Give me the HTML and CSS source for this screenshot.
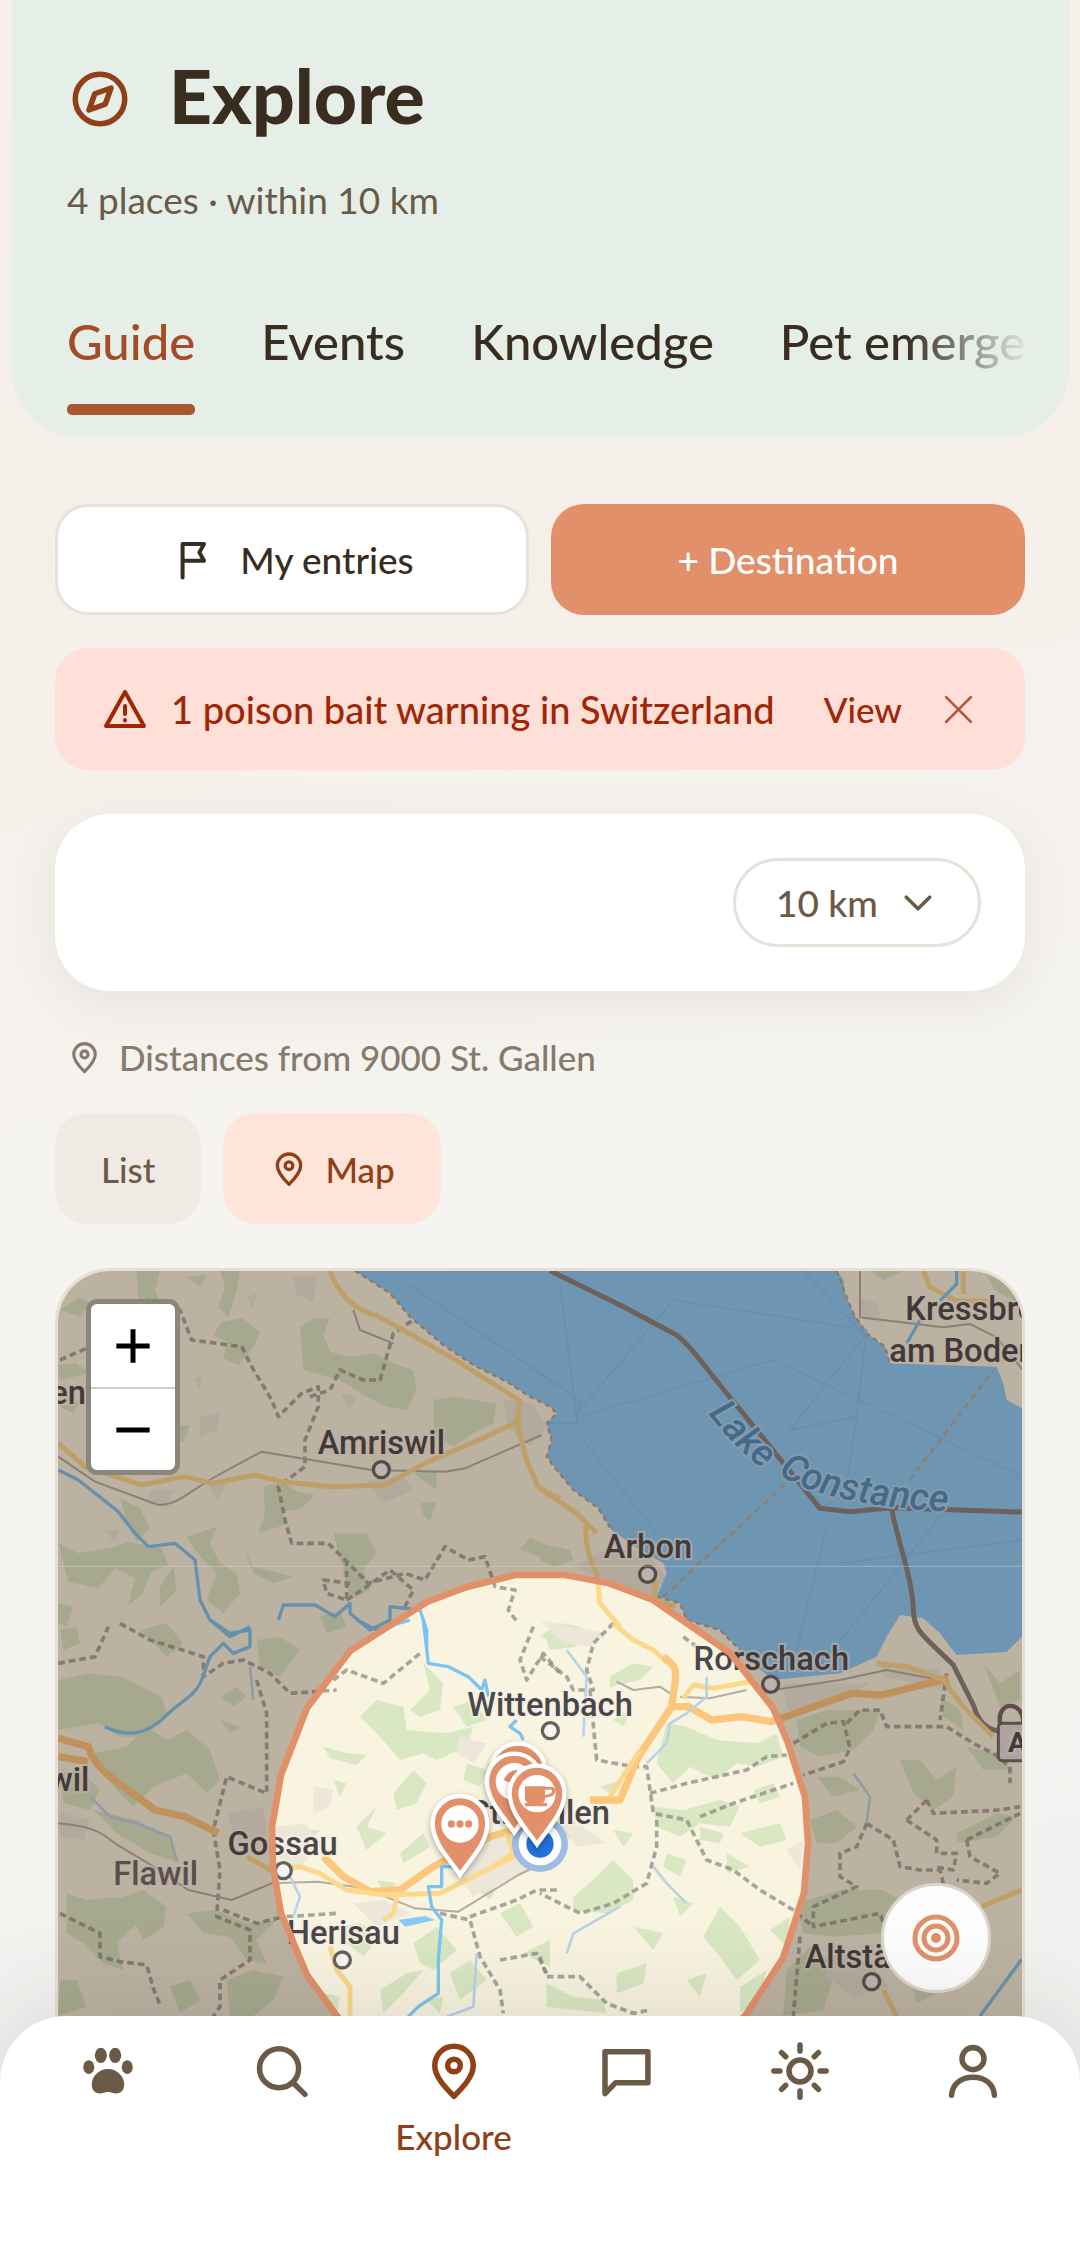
FILE: index.html
```html
<!DOCTYPE html>
<html lang="en">
<head>
  <meta charset="UTF-8">
  <meta name="viewport" content="width=device-width, initial-scale=1">
  <title>Explore</title>
  <link rel="stylesheet" href="styles.css">
</head>
<body>

  <!-- shared icons -->
  <svg class="defs" aria-hidden="true">
    <symbol id="icon-pin" viewBox="0 0 24 24">
      <path d="M12 21.2C8.6 17.8 5 14 5 10a7 7 0 0 1 14 0c0 4-3.6 7.800-7 11.200z"/>
      <circle cx="12" cy="10" r="2.300"/>
    </symbol>
    <symbol id="marker" viewBox="-100 -270 200 280" overflow="visible">
      <path class="marker-body" d="M0-14C-35-65-82-110-82-168A82 82 0 1 1 82-168C82-110 35-65 0-14z"/>
      <circle class="marker-hole" cx="0" cy="-166" r="56"/>
    </symbol>
  </svg>

  <header class="header">
    <div class="title-row">
      <svg class="icon title-icon" viewBox="0 0 24 24">
        <circle cx="12" cy="12" r="9"/>
        <path d="M16 8l-2.100 5.900L8 16l2.100-5.900z"/>
      </svg>
      <h1>Explore</h1>
    </div>
    <p class="subtitle">4 places · within 10 km</p>
    <nav class="tabs" aria-label="Sections">
      <a class="tab active" href="#guide">Guide</a>
      <a class="tab" href="#events">Events</a>
      <a class="tab" href="#knowledge">Knowledge</a>
      <a class="tab" href="#emergency">Pet emergency</a>
    </nav>
  </header>

  <main class="content">
    <div class="actions">
      <button type="button" class="btn btn-outline">
        <svg class="icon flag-icon" viewBox="0 0 24 24">
          <path d="M6.300 20.800V4H17l-2.300 4.200 2.300 4.200H6.300"/>
        </svg>
        My entries
      </button>
      <button type="button" class="btn btn-primary">+ Destination</button>
    </div>

    <div class="alert" role="alert">
      <svg class="icon alert-icon" viewBox="0 0 24 24">
        <path d="M12 3.500L21.500 20.500h-19zM12 10.500v4M12 17.500v.3"/>
      </svg>
      <span class="alert-text">1 poison bait warning in Switzerland</span>
      <a class="alert-link" href="#warnings">View</a>
      <button type="button" class="alert-close" aria-label="Close">
        <svg class="icon" viewBox="0 0 24 24"><path d="M3 3l18 18M21 3L3 21"/></svg>
      </button>
    </div>

    <div class="filter-card">
      <div class="radius">
        <select id="radius" name="radius" aria-label="Radius">
          <option>10 km</option>
          <option>25 km</option>
          <option>50 km</option>
        </select>
        <svg class="icon" viewBox="0 0 24 24"><path d="M2 7l10 10L22 7"/></svg>
      </div>
    </div>

    <p class="origin">
      <svg class="icon"><use href="#icon-pin"/></svg>
      Distances from 9000 St. Gallen
    </p>

    <div class="view-switch">
      <button type="button" class="view">List</button>
      <button type="button" class="view active">
        <svg class="icon"><use href="#icon-pin"/></svg>
        Map
      </button>
    </div>

    <section class="map" aria-label="Map">
      <svg class="map-canvas" viewBox="0 0 2892 2433" preserveAspectRatio="xMidYMin slice">
        <defs>
          <path id="lake-a" d="M1950 428Q2040 545 2150 620"/>
          <path id="lake-b" d="M2160 606Q2290 712 2800 728"/>
        </defs>
        <rect class="land" width="2892" height="2433"/>

        <!-- north west -->
        <g transform="translate(-54 -63)">
          <path class="forest" d="M290 62l70 0-15 60 30 60-10 70-30-80-40-20zM440 80l60-5-20 35zM540 62h60l-10 60-25 80-30-30 20-60zM545 215l60-10 55 40-15 40-50 60-45-20 10-50-40-20zM780 230l40-25h50l-20 50 20 50 60 15 70-10 60 30 60 20 10 60-30 60-60-10-60-30-80-50-110-30zM1180 450l60-10 130 20-10 60-60 30-60 40-60-40zM50 345l60-5 40 30-90 20zM60 470l60-20-20 40zM240 745l60 30 30 60-40 40-30-60zM670 710l60-15 40 30 55 10-40 40-60 10 10 40-80 25 20-60zM1140 760l50-5-20 60-20-20zM55 880l60 30 110-20 40-15 100 20 20 50-50 20-30 70-40 30 20-80-60-30-50 60-90-20zM440 860l90-30-20 50 30 60 50 30 10 60-50 60-50-40 30-80-50-50zM610 890l30 60 120 30-60 20-60-30zM880 850h100l30 60-40 50 20 60-60 30-20-90zM50 1060l50 10-20 60-30-10zM840 1100l60-20 20 50-60 20zM1120 670l70-10v60zM405 525h45l-20 50-25-5zM60 180l60-40 30 20-30 40zM360 1010l40-60 10 70-50 50zM1470 860l50 30-20 30-60-20z"/>
          <path class="town" d="M760 80l70-5-10 80-50-20zM480 500l60-10-10 50-50 20zM330 720l70 0-20 50-60-10zM980 690l110-10 30 40-90 40zM1390 450l90 10 40 70-50 60-70-60zM500 690l60 10-30 50zM460 390l30-20-10 50zM900 430l50 10-20 40zM200 840l40 0-20 40zM620 140l30-10-10 50z"/>
          <path class="border" d="M320 150l100 30 35 90 150 20 30 60 60 100 20 50 70-70 50-20 0 60-40 100 0 80-80 60 20 100 20 70 110 0 60 60 60 60 110-30 60 20 60-100 70 40 50-10 30 90 60 10-20 60 30 40M810 440l60-20 30-60 70 30 50 0 40-140 60-40M60 330l90-40M920 930l0 120-60-20-10-40 80 10M920 1050l60-40 70-50 70 60-30 60"/>
          <path class="rail" d="M55 620l110 75 190 70c60 0 90-40 180-90l130-70 330 55 220 5 60-10 230-100M940 180l20 60 100 40"/>
          <path class="road" d="M55 580l80 70 170 55 130-25 80 20 130-25 80 20 150 15 160-5 120-65 160-70 130-60M870 62c20 60 70 120 140 135l110 60 130 75 110 70 80 50-10 60 30 120 35 80 65 35"/>
          <path class="river" d="M55 660l60 30 120 95 50 65 40 40 80-10 60 50 15 120 30 60 60 50 60-30M715 1110l15-45 95 0 60 35 45-40 0 30 60 50 60-30 0-40 90 10 20 60v60"/>
        </g>

        <!-- north east, with the lake -->
        <g transform="translate(1446 -63)">
          <path class="forest" d="M990 62h100l-60 30zM1330 62l80 40 35 60-80-40zM10 1150l60-30 60 20-20 50-80 10zM0 880l90 20 10 30-60 20-40-20z"/>
          <path class="town" d="M100 950l110-60 110 20 60 70-40 60-110-40zM950 140l60 20 20 60-60-10z"/>
          <path class="water" d="M-555 62L-450 130-390 200-290 285-200 345-100 395-30 440 30 470 50 490 20 520 35 570 20 620 50 660 100 720 175 775 215 840 300 900 370 940 380 970 350 1040 420 1060 440 1110 540 1140 600 1200 650 1250 700 1290 900 1270 1010 1220 1040 1160 1080 1095 1150 1105 1200 1150 1250 1215 1340 1210 1400 1205 1446 1160V475L1400 450 1390 400 1370 350 1200 345 1050 340 1035 290 980 250 940 190 915 130 910 90 890 62z"/>
          <path class="shore" d="M-555 62L-450 130-390 200-290 285-200 345-100 395-30 440 30 470 50 490 20 520 35 570 20 620 50 660 100 720 175 775 215 840M350 1040l70 20 20 50 100 30 60 60M890 62l25 68 25 60 40 60 55 40 15 50"/>
          <path class="depth" d="M60 100l50 400M120 480L400 150 980 240 950 500 750 540 980 250M120 500l580-170 750 350M790 62l190 200M950 500l-30 200M860 830l-90 370M0 370l120 80-10 70-90 0M120 560l230 290M900 940l545-70M830 1260l370-460M-400 100l400 270"/>
          <path class="ferry" d="M370 1040L760 680M1110 690l250-330"/>
          <path class="frontier" d="M30 62L240 165 410 255c50 40 80 90 130 150L840 775l90 10 125-12 390 13M1055 775c15 90 60 200 65 300 0 70 30 80 120 170l60 120c20 70 60 90 130 70"/>
          <path class="road" d="M1150 62l20 50 80 40h90M1270 62v70M0 715l110 75 60 60M140 820c-10 60 10 110 30 150l10 90 60 70M345 990v60l60 20"/>
          <path class="rail" d="M960 62v140l250 30 80-10 80 40 80 100"/>
          <path class="river" d="M1250 62v40l-50 50M1140 210l-40 70"/>
        </g>

        <!-- south west -->
        <g transform="translate(-54 1047)">
          <path class="forest" d="M55 180l90-20 100 10 120 60 20 60-90 60-60 0-60-40-120 20zM160 400l100-20 60-60 60 40 60-30 70 60 30 90-40 40-60-60-100 40-60 60-60-60zM60 460l60-10 60 60-30 60-80-20zM540 230l50-30 30 30-40 30zM540 300l60 20-30 20zM650 60l70-10 60 40-60 80-60-30zM160 570l130 30 90 50 40 80-90-30-100-60zM290 640l50-20 10 80zM80 820l60 20 90-10 60 80-60 60 20 80-60-20-60-60-50-30zM220 840l90-30 70 50-10 60-60 40-30-60zM440 880l90-10 90 40 90-10-60 60 30 70-60-10-50-70-80-10zM560 1080l80-30 90 20-30 70-60 48h-70zM60 1080l50 0 30 80-85 28zM390 1100l60-20 30 60-60 40zM960 290l50-50 80 20 10 70 120 10 80-20-20 60-90 40-40-20-70 20-60-70zM850 380l70 20 60 5-30 30-80-20zM1150 130l60 60-10 80-60 20-30-20 60-60zM950 620l60-60-30 60 60 20-60 50zM1060 520l60-70 40 40-30 60-60 20zM770 630l70 0-30 30zM1080 700l70-60 20 40-80 50zM1120 970l70-50 60 70-70 60-40-20zM900 920l60-10 60 40-50 60-50-40zM1020 1110l80-50 50-10-60 70-60 60zM1230 1060l60-40 50 60-80 60zM1380 880l60-30 40 70-50 30zM1320 660l60 40-30 50zM850 1120l50 10-10 50zM1450 1000l80-40 0 80zM1500 50l60-30v50zM1240 260l60-20 40 60-60 20zM1280 430l60 20-20 50-50-20zM880 480l40 10-20 40zM1010 780l60 10-30 40zM1300 800l70 0-20 40zM300 30l80-20 50 60-50 40zM60 30l50-10 10 50-50 20zM1160 1140l50-10-10 50z"/>
          <path class="town" d="M820 500l60 10-10 50-50 20zM1260 350l80 20-40 60-50-30zM700 620l90-10 60 60-80 80-90-60zM1200 700l220-60 140 10v60l-260 120zM940 850l90-10 80 40-100 40zM560 580l110-20 10 90-90 10zM60 580l90 20-20 60-70-10zM1310 740l100 0-50 60z"/>
          <path class="border" d="M55 130l110-20 40-90M240 10l90 50 160 50 0 60 60-40 60-10 80 40 60 60 140-10M880 180l40-30 110 40 110-90M650 180l30 100 0 240-120-50-20 80-20 80 20 120-10 140 100 40 0 90-90 60 0 80-40 60M60 880l120 60 0 70 60 15 80 10 20 70 20 50M740 890l150-10M1200 880l90 20 30 110 60 100 10 70M1290 890l140-50 60-30h70M1480 20l-40 100 20 60 50-80 50 60M1380 1020l110-20 30 60M550 870l100 40 80-20"/>
          <path class="rail" d="M55 610c100 10 120 20 170 60l100 60 120 80 130 30 120-50 140-5 140 20 150 60 130 10 180-110 120-60"/>
          <path class="motorway" d="M55 410l90 15M55 355l90 25c20 70 80 100 200 190l90 20 100 50"/>
          <path class="motorway" d="M850 710l60 60 80 45 90-5 100-70 170-90 70-20"/>
          <path class="road" d="M620 710l70 40 90-10 60 20 80 50 120 15 160-5 140-70 100-50M1070 830l-10 50-30 20M870 980l20 70 40 50v90M1400 640l20 60-60 40"/>
          <path class="river" d="M510 0l60 40 60-10 0 50-50 20-30-30-40 40-25 70c-20 50-60 60-110 110-60 60-120 60-180 30M950 0l60 30 100-30M1150 0l15 130 60 10 60 30 40 40 10-30 10 50M1430 300l-20 20 30 20 10 20M1240 740h-35v60l-40 0 10 60 30 40-10 120 0 100-60 40-60 60"/>
          <path class="stream" d="M150 530l60 60 80 20 100 40 20 70M640 240l-10-100M1310 1000l-10 160-80 30M760 890l20-60-30-60"/>
          <path class="water" d="M1075 900l80-12 30 12-90 20z"/>
        </g>

        <!-- south east -->
        <g transform="translate(1446 1047)">
          <path class="forest" d="M20 40l50-30 50 10-30 50-60 0zM210 170l70-40 60 10-40 40-90 20zM380 310l60 10 90 40 120 10 60-30 20 70-80 30-60-10-60 50-80-40-50 50-50-60zM340 560l90 10 110-30 60 20-30 60-90-10-60 40-70-30zM100 830l60-50 60-60 60 60 0 60-80 40-100-10zM480 620l70 20-10 30-60-10zM600 640l120-30 20 50-80 20zM280 920l90 20-30 50zM490 950l50-90 60 60 60 100-70 60-50-70zM230 1060l90-30-10 60-80 30zM600 1100l80-50-20 80-60 50zM20 1090l80 40 90 10 10 40-180-20zM690 930l60-40-10 90zM220 300l60-40-30 60zM770 300l90-30 160 0-20 60-60 60-100 20-60-30zM1080 420l60 0 50 60 60-40-10 90-60 40-60-50zM810 600l80-30 60 50-60 50-60 0zM770 850l130-40 130 0 90 50-100 80-140 10-90-10zM740 1050l70-70 80 60-40 130-120 18zM1330 130l50 60 60-40v90l-60 20zM1280 380l80 20 60 50-90 0zM1250 640l120-60 60 10-60 60-120 20zM1110 1080l50-20 30 60-60 30zM560 700l70 40-70 20zM180 500l60-20-20 50zM220 630l60 10-30 40zM380 700l60 20-20 50-50-30zM60 620l50-20-20 60zM400 830l60 20-40 40zM440 1080l60-20-20 70zM640 510l60-20 20 40-60 20zM830 470l70 0 60 40-80 20zM1050 960l60-20 20 40zM1200 230l60 40 10 60-60-40z"/>
          <path class="town" d="M1020 130l180 20 20 60-190-40zM730 190l260 0-100 60-150 20zM60 600l70 20 70 50-90 10zM860 970l130 60 60 70-110 30-80-60zM0 0l200 40-50 40-80-10zM740 690l50-30-10 90z"/>
          <path class="border" d="M0 110l80 60 20 40 60 0-20-60 20-80 60-60M150 210l20 210 110 20 40 0 20 140 100 20 60 120 80 30 80 60 100 60 60 50M330 520l110-30 180-40 60-40 60-5M480 590l100-40 180-60M350 600l0 80-30 110-100 60-100 30-120-60M760 370l100-60 50-5 20 80-20 40-120 40M920 310l40-40 60 0 20 50 180 0 80 50 60 30 50 40v50M1220 160l-20 140M1160 540l20 40 200-10 60-10M1100 600l60-60M1100 600l90 60 0 40 60 0-10 50-60-10M980 610l80 50 20 80 60 10 60 0 10 40M980 610l-30 70-50 20 0 70 50 30-130 60 0 60 200-40 20 60 30 50M1280 660l160-80M1280 660l10 50 90 50-40 30-90-10M780 950l-20 240M0 1010l20 60 100 0 80 80 80 30 50-10M430 50l40 30"/>
          <path class="rail" d="M230 185l50 25 80-10 30 20M420 230l90 5 110-25M700 210l200-30 140-30 160 30"/>
          <path class="stream" d="M80 90l60 80-10 180M340 740l40 50 60 60M80 1000l20-60 140-80M940 460l50 70-10 80"/>
          <path class="road" d="M220 10l60 50 60 30 45 40"/>
          <path class="motorway" d="M370 110c40 30 40 40 35 80l-10 70-100 150-55 130h-90M395 260l50 0 70 40 90-10 90 15 240-85 90 5 200-50"/>
          <path class="road" d="M430 235l30-40 60 10 110-20M1010 130l90 10 110 40 60 80 90 90M1445 810l-120 50M1030 1110l40 80M300 390l-90 140"/>
          <path class="river" d="M1320 1188l125-170"/>
          <path class="stream" d="M500 170l0 60-60 50-50 30-10 60-60 60"/>
          <path class="tunnel" d="M1380 310c-10-70 70-70 70 0"/>
          <rect class="shield" x="1375" y="310" width="120" height="112" rx="12"/>
        </g>

        <!-- place names -->
        <g class="labels">
          <text x="84" y="398" text-anchor="end">Weinfelden</text>
          <text x="970" y="549">Amriswil</text>
          <text x="1770" y="860">Arbon</text>
          <text x="2542" y="146" text-anchor="start">Kressbronn</text>
          <text x="2494" y="272" text-anchor="start">am Bodensee</text>
          <text x="2140" y="1198">Rorschach</text>
          <text x="1476" y="1336">Wittenbach</text>
          <text x="1656" y="1660" text-anchor="end">St. Gallen</text>
          <text x="674" y="1752">Gossau</text>
          <text class="minor" x="293" y="1842">Flawil</text>
          <text x="856" y="2020">Herisau</text>
          <text x="2240" y="2090" text-anchor="start">Altstätten</text>
          <text x="94" y="1560" text-anchor="end">Bütschwil</text>
          <text class="shield-text" x="2850" y="1442" text-anchor="start">A14</text>
        </g>
        <g class="lake-name">
          <text><textPath href="#lake-a">Lake</textPath></text>
          <text><textPath href="#lake-b">Constance</textPath></text>
        </g>
        <g class="places">
          <circle cx="970" cy="596" r="24"/>
          <circle cx="1769" cy="910" r="24"/>
          <circle cx="2138" cy="1240" r="24"/>
          <circle cx="1477" cy="1379" r="24"/>
          <circle cx="676" cy="1799" r="24"/>
          <circle cx="853" cy="2067" r="24"/>
          <circle cx="2441" cy="2132" r="24"/>
        </g>

        <!-- everything outside the search radius is dimmed -->
        <path class="dim" fill-rule="evenodd" d="M0 0H2892V2433H0zM1371 912H1521L1650 936 1785 987 2016 1146 2145 1311 2190 1416 2241 1578 2250 1716 2238 1866 2175 2061 2061 2235 1926 2367 1449 2433 960 2367 837 2235 747 2112 669 1926 645 1788 642 1668 669 1512 747 1311 876 1140 1107 993 1227 948z"/>
        <path class="range" d="M1371 912H1521L1650 936 1785 987 2016 1146 2145 1311 2190 1416 2241 1578 2250 1716 2238 1866 2175 2061 2061 2235 1926 2367 1449 2533 960 2367 837 2235 747 2112 669 1926 645 1788 642 1668 669 1512 747 1311 876 1140 1107 993 1227 948z"/>
        <path class="seam" d="M0 886H2892"/>

        <!-- own position -->
        <circle class="me-halo" cx="1446" cy="1719" r="84"/>
        <circle class="me-ring" cx="1446" cy="1719" r="64"/>
        <circle class="me-dot" cx="1446" cy="1719" r="41"/>

        <!-- places found -->
        <g class="marker" transform="translate(1380 1668)">
          <use href="#marker" x="-100" y="-270" width="200" height="280"/>
        </g>
        <g class="marker" transform="translate(1369 1698)">
          <use href="#marker" x="-100" y="-270" width="200" height="280"/>
          <path class="marker-sign" d="M-32-172q16-30 40-28v26q-20 12-30 8z"/>
        </g>
        <g class="marker" transform="translate(1206 1825)">
          <use href="#marker" x="-100" y="-270" width="200" height="280"/>
          <circle class="marker-sign" cx="-26" cy="-166" r="11"/>
          <circle class="marker-sign" cx="0" cy="-166" r="11"/>
          <circle class="marker-sign" cx="26" cy="-166" r="11"/>
        </g>
        <g class="marker" transform="translate(1437 1734)">
          <use href="#marker" x="-100" y="-270" width="200" height="280"/>
          <path class="marker-sign" d="M-36-188h60v38q0 8-6 12h12v10h-66v-10h8q-8-4-8-12z"/>
          <path class="marker-handle" d="M24-182h18q8 0 8 8 0 14-26 16"/>
        </g>
      </svg>

      <div class="zoom">
        <button type="button" aria-label="Zoom in"><svg viewBox="0 0 24 24"><path d="M2 12h20M12 2v20"/></svg></button>
        <button type="button" aria-label="Zoom out"><svg viewBox="0 0 24 24"><path d="M2 12h20"/></svg></button>
      </div>
      <button type="button" class="locate" aria-label="Center map">
        <svg viewBox="0 0 48 48">
          <circle cx="24" cy="24" r="21"/>
          <circle cx="24" cy="24" r="12"/>
          <circle class="core" cx="24" cy="24" r="5"/>
        </svg>
      </button>
    </section>
  </main>

  <nav class="bottom-nav" aria-label="Main">
    <a href="#home" aria-label="Home">
      <svg class="icon solid" viewBox="0 0 24 24">
        <ellipse cx="5" cy="10.600" rx="2" ry="2.500"/>
        <ellipse cx="9.400" cy="6.300" rx="2.200" ry="2.800"/>
        <ellipse cx="14.600" cy="6.300" rx="2.200" ry="2.800"/>
        <ellipse cx="19" cy="10.600" rx="2" ry="2.500"/>
        <path d="M12 11.300c3.500 0 5.900 2.900 5.900 5.600 0 3.300-2.900 3.600-4.400 3-1-.4-2-.4-3 0-1.500.6-4.400.3-4.400-3 0-2.700 2.400-5.600 5.900-5.600z"/>
      </svg>
    </a>
    <a href="#search" aria-label="Search">
      <svg class="icon" viewBox="0 0 24 24"><circle cx="11.300" cy="11" r="7.100"/><path d="M16.400 16.300l4.300 4.200"/></svg>
    </a>
    <a class="active" href="#explore">
      <svg class="icon"><use href="#icon-pin"/></svg>
      Explore
    </a>
    <a href="#chat" aria-label="Messages">
      <svg class="icon" viewBox="0 0 24 24"><path d="M4 5h15.600v11.300H7.800L4 20.200z"/></svg>
    </a>
    <a href="#weather" aria-label="Weather">
      <svg class="icon" viewBox="0 0 24 24">
        <circle cx="12" cy="12" r="4"/>
        <path d="M12 2.500v2.200M12 19.300v2.200M2.500 12h2.200M19.300 12h2.200M5.300 5.300l1.500 1.500M17.200 17.200l1.500 1.500M5.300 18.700l1.500-1.500M17.200 6.800l1.500-1.500"/>
      </svg>
    </a>
    <a href="#profile" aria-label="Profile">
      <svg class="icon" viewBox="0 0 24 24"><circle cx="12" cy="7.500" r="4"/><path d="M4.200 20.800c.3-4.200 3.600-6.500 7.800-6.500s7.500 2.300 7.800 6.500"/></svg>
    </a>
  </nav>

</body>
</html>
```

FILE: styles.css
```css
* {
  box-sizing: border-box;
}
body {
  margin: 0;
  min-height: 100vh;
  display: flex;
  flex-direction: column;
  font-family: Lato, "Open Sans", sans-serif;
  font-size: 37px;
  font-weight: 500;
  color: #392d20;
  background: linear-gradient(170deg, #f6efea 0%, #f5f0ea 30%, #f5f4f0 55%, #f1f0ef 100%);
}
h1, p {
  margin: 0;
}
a {
  color: inherit;
  text-decoration: none;
}
button, select {
  font: inherit;
  color: inherit;
  border: none;
  background: none;
  padding: 0;
}
.defs {
  position: absolute;
  width: 0;
  height: 0;
}
.icon {
  flex: none;
  fill: none;
  stroke: currentColor;
  stroke-width: 2;
  stroke-linecap: round;
  stroke-linejoin: round;
}
.icon.solid {
  fill: currentColor;
  stroke: none;
}

/* header */
.header {
  margin: 0 11px 0 12px;
  padding: 51px 38px 22px 55px;
  background: #e6eee8;
  border-radius: 0 0 66px 66px;
}
.title-row {
  display: flex;
  align-items: center;
  gap: 36px;
  height: 96px;
}
.title-icon {
  width: 66px;
  height: 66px;
  color: #8f4016;
}
h1 {
  padding-bottom: 8px;
  font-size: 75px;
  font-weight: 900;
  line-height: 80px;
}
.subtitle {
  margin-top: 29px;
  font-weight: 400;
  line-height: 48px;
  color: #6b5a47;
}
.tabs {
  display: flex;
  gap: 66px;
  margin-top: 79px;
  overflow: hidden;
  white-space: nowrap;
  -webkit-mask-image: linear-gradient(to right, #000 87%, transparent);
  mask-image: linear-gradient(to right, #000 87%, transparent);
}
.tab {
  position: relative;
  padding-bottom: 36px;
  font-size: 49px;
  line-height: 76px;
}
.tab.active {
  color: #a34c26;
}
.tab.active::after {
  content: "";
  position: absolute;
  left: 0;
  right: 0;
  bottom: 0;
  height: 11px;
  border-radius: 5px;
  background: #a9572f;
}

/* content */
.content {
  flex: 1;
  display: flex;
  flex-direction: column;
  padding: 67px 55px 0;
}
.actions {
  display: grid;
  grid-template-columns: 1fr 1fr;
  gap: 22px;
}
.btn {
  display: flex;
  align-items: center;
  justify-content: center;
  gap: 22px;
  height: 111px;
  border-radius: 33px;
}
.btn-outline {
  background: #fff;
  border: 3px solid #e8e1d7;
}
.btn-primary {
  background: #e1906a;
  color: #fff;
}
.flag-icon {
  width: 48px;
  height: 48px;
}
.alert {
  display: flex;
  align-items: center;
  height: 122px;
  margin-top: 33px;
  padding: 0 50px 0 46px;
  border-radius: 33px;
  background: #ffe0d8;
  color: #9f2706;
}
.alert-icon {
  width: 48px;
  height: 48px;
}
.alert-text {
  flex: 1;
  margin-left: 22px;
  font-size: 38px;
}
.alert-link {
  font-size: 35px;
}
.alert-close {
  display: flex;
  margin-left: 40px;
  opacity: 0.75;
}
.alert-close .icon {
  width: 33px;
  height: 33px;
}
.filter-card {
  display: flex;
  justify-content: flex-end;
  margin-top: 44px;
  padding: 44px;
  border-radius: 55px;
  background: #fff;
  box-shadow: 0 12px 48px rgba(80, 70, 60, 0.08);
}
.radius {
  display: flex;
  align-items: center;
  height: 89px;
  padding: 0 46px 0 40px;
  border: 3px solid #e8e1d7;
  border-radius: 45px;
  color: #6b5a47;
}
.radius select {
  appearance: none;
}
.radius .icon {
  width: 28px;
  height: 28px;
  margin-left: 26px;
  stroke-width: 3;
}
.origin {
  display: flex;
  align-items: center;
  gap: 16px;
  margin-top: 44px;
  padding-left: 11px;
  font-size: 35px;
  line-height: 44px;
  color: #857a6c;
}
.origin .icon {
  width: 37px;
  height: 37px;
}
.view-switch {
  display: flex;
  gap: 22px;
  margin-top: 34px;
}
.view {
  display: flex;
  align-items: center;
  gap: 16px;
  height: 111px;
  padding: 0 46px;
  border-radius: 33px;
  font-size: 35px;
  background: #f0eae4;
  color: #6b5a47;
}
.view.active {
  background: #ffe4d9;
  color: #8f4016;
}
.view .icon {
  width: 40px;
  height: 40px;
}

/* map */
.map {
  position: relative;
  flex: 1;
  min-height: 600px;
  margin-top: 44px;
  border: 3px solid #e6dfd4;
  border-radius: 55px 55px 0 0;
  overflow: hidden;
}
.map-canvas {
  position: absolute;
  inset: 0;
  width: 100%;
  height: 100%;
}
.land { fill: #f8f4e0; }
.forest { fill: #d9e7c2; }
.town { fill: #ede7d9; }
.water { fill: #88cbf7; }
.shore, .depth, .ferry, .frontier, .border, .rail, .road, .motorway, .river, .stream, .tunnel {
  fill: none;
  stroke-linejoin: round;
}
.shore {
  stroke: #b4a08e;
  stroke-width: 7;
  stroke-dasharray: 14 12;
}
.depth {
  stroke: #7fbfea;
  stroke-width: 4;
}
.ferry {
  stroke: #bba894;
  stroke-width: 8;
  stroke-dasharray: 18 16;
}
.frontier {
  stroke: #88807c;
  stroke-width: 15;
}
.border {
  stroke: #8d8b86;
  stroke-width: 11;
  stroke-dasharray: 20 12;
  opacity: 0.75;
}
.rail {
  stroke: #b2aca4;
  stroke-width: 6;
}
.road {
  stroke: #fbd98c;
  stroke-width: 15;
}
.motorway {
  stroke: #fcc67c;
  stroke-width: 22;
}
.river {
  stroke: #7cc4f0;
  stroke-width: 10;
}
.stream {
  stroke: #b9d3e6;
  stroke-width: 8;
}
.tunnel, .shield {
  stroke: #6f6664;
  stroke-width: 13;
}
.shield {
  fill: #e4dfe0;
  stroke-width: 9;
}
.labels {
  font-family: Roboto, sans-serif;
  font-size: 98px;
  font-weight: 500;
  fill: #4b4747;
  stroke: #f4f1ea;
  stroke-width: 12;
  stroke-opacity: 0.7;
  paint-order: stroke;
  text-anchor: middle;
}
.minor { fill: #6c6663; }
.shield-text {
  font-size: 84px;
  font-weight: 700;
}
.lake-name {
  font-family: Roboto, sans-serif;
  font-size: 114px;
  font-style: italic;
  font-weight: 500;
  fill: #4a8dc0;
  stroke: #a7d3ee;
  stroke-width: 12;
  paint-order: stroke;
}
.places {
  fill: #f7f5f2;
  stroke: #66615e;
  stroke-width: 10;
}
.dim { fill: rgba(50, 25, 20, 0.3); }
.range {
  fill: none;
  stroke: #e1906a;
  stroke-width: 20;
}
.seam {
  stroke: rgba(240, 240, 220, 0.35);
  stroke-width: 3;
}
.me-halo { fill: #9dbbe5; }
.me-ring { fill: #fff; }
.me-dot { fill: #2272de; }
.marker {
  filter: drop-shadow(0 8px 10px rgba(0, 0, 0, 0.3));
}
.marker-body {
  fill: #e1906a;
  stroke: #fff;
  stroke-width: 13;
  stroke-linejoin: miter;
}
.marker-hole { fill: #fff; }
.marker-sign { fill: #e1906a; }
.marker-handle {
  fill: none;
  stroke: #e1906a;
  stroke-width: 9;
}

.zoom {
  position: absolute;
  top: 28px;
  left: 28px;
  border: 5px solid #8a877a;
  border-radius: 11px;
  background: #fff;
}
.zoom button {
  display: flex;
  align-items: center;
  justify-content: center;
  width: 84px;
  height: 83px;
}
.zoom button + button {
  border-top: 2px solid #ccc;
}
.zoom svg {
  width: 40px;
  height: 40px;
  stroke: #000;
  stroke-width: 3;
}
.locate {
  position: absolute;
  right: 31px;
  bottom: 86px;
  display: flex;
  align-items: center;
  justify-content: center;
  width: 110px;
  height: 110px;
  border: 3px solid #dcd7ce;
  border-radius: 50%;
  background: #fdfdfd;
}
.locate svg {
  width: 48px;
  height: 48px;
  fill: none;
  stroke: #e1906a;
  stroke-width: 5;
}
.locate .core {
  fill: #e1906a;
  stroke: none;
}

/* bottom navigation overlaps the lower edge of the map */
.bottom-nav {
  position: relative;
  display: grid;
  grid-template-columns: repeat(6, 1fr);
  margin-top: -66px;
  padding: 22px 21px 96px;
  border-radius: 66px 66px 0 0;
  background: #fff;
  box-shadow: 0 -12px 96px rgba(50, 40, 30, 0.12);
}
.bottom-nav a {
  display: flex;
  flex-direction: column;
  align-items: center;
  gap: 10px;
  height: 134px;
  font-size: 35px;
  line-height: 44px;
  color: #6b5a47;
}
.bottom-nav a.active {
  color: #8f4016;
}
.bottom-nav .icon {
  width: 66px;
  height: 66px;
}
```
